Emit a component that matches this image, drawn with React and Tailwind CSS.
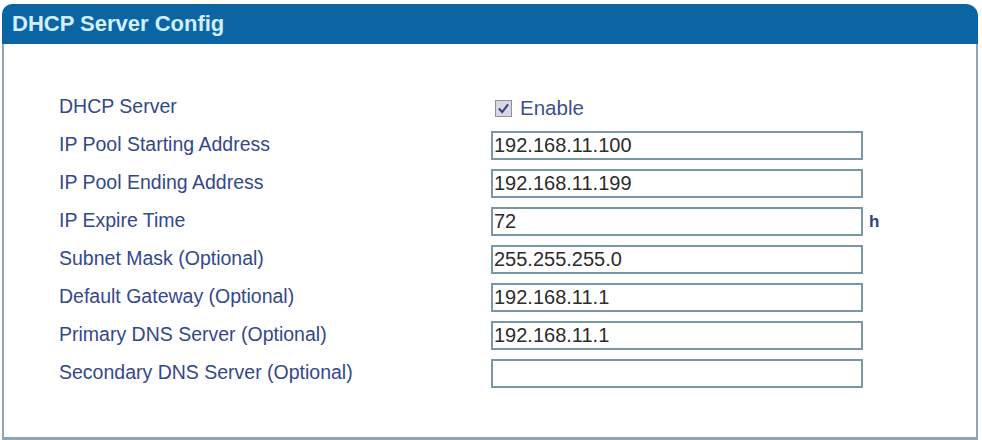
import React from "react";

const rows = [
  { label: "IP Pool Starting Address", value: "192.168.11.100" },
  { label: "IP Pool Ending Address", value: "192.168.11.199" },
  { label: "IP Expire Time", value: "72", unit: "h" },
  { label: "Subnet Mask (Optional)", value: "255.255.255.0" },
  { label: "Default Gateway (Optional)", value: "192.168.11.1" },
  { label: "Primary DNS Server (Optional)", value: "192.168.11.1" },
  { label: "Secondary DNS Server (Optional)", value: "" },
];

const App = () => {
  return (
    <div className="w-[982px] h-[440px] bg-white pt-[4px] pl-[2px] pr-[4px] font-['Liberation_Sans',Arial,sans-serif]">
      {/* Header */}
      <div className="h-[40px] bg-[#0b65a5] rounded-tl-[10px] rounded-tr-[12px] flex items-center pl-[10px]">
        <span className="text-[22px] font-bold text-[#d3effc] leading-none">DHCP Server Config</span>
      </div>

      {/* Body */}
      <div className="h-[396px] border-l-2 border-r-2 border-b-[3px] border-[#8ea6b4] pt-[44px] pl-[55px]">
        <div className="flex items-center h-[38px]">
          <div className="w-[432px] text-[19.5px] text-[#34488c] leading-none">DHCP Server</div>
          <label className="flex items-center gap-[8px] pl-[4px] pt-[2px]">
            <span className="w-[17px] h-[17px] border border-[#8f8f9f] bg-[#d8d8e2] flex items-center justify-center">
              <svg width="13" height="13" viewBox="0 0 10 10">
                <path d="M1.5 5 L4 7.8 L8.5 1.8" stroke="#3b3f8a" strokeWidth="1.6" fill="none" />
              </svg>
            </span>
            <span className="text-[20.5px] text-[#3d4f8e] leading-none">Enable</span>
          </label>
        </div>
        {rows.map((r) => (
          <div key={r.label} className="flex items-center h-[38px]">
            <div className="w-[432px] text-[19.5px] text-[#34488c] leading-none">{r.label}</div>
            <div className="w-[372px] h-[29px] border-2 border-[#7898a6] bg-white flex items-center pl-[1px] text-[20px] text-[#2c2c2c] leading-none">
              {r.value}
            </div>
            {r.unit && <span className="ml-[6px] text-[17px] font-bold text-[#2d3f86] leading-none">{r.unit}</span>}
          </div>
        ))}
      </div>
    </div>
  );
};

export default App;
